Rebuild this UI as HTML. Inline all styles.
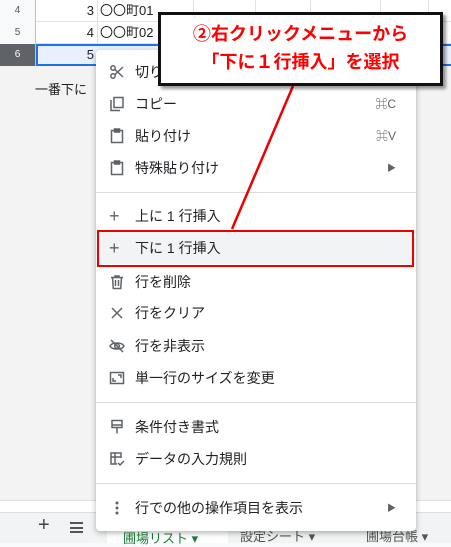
<!DOCTYPE html>
<html><head><meta charset="utf-8"><style>
*{margin:0;padding:0;box-sizing:border-box}
body{width:451px;height:543px;overflow:hidden;background:#f8f9fa;font-family:"Liberation Sans","Noto Sans CJK JP",sans-serif;position:relative;color:#202124}
.a{position:absolute}
.row{position:absolute;left:0;width:451px;height:22px;background:#fff;border-bottom:1px solid #e2e2e2;font-size:13px}
.rh{position:absolute;left:0;top:0;width:36px;height:22px;background:#f8f9fa;border-right:1px solid #c0c0c0;font-size:10px;color:#555;text-align:center;line-height:22px}
.vl{position:absolute;top:0;height:22px;width:1px;background:#e2e2e2}
.mi{position:absolute;left:96px;width:320px;height:32px;font-size:14px;line-height:32px}
.mi .t{position:absolute;left:39px}
.mi .k{position:absolute;right:20px;color:#5f6368;font-size:12px}
.mi .ic{position:absolute;left:13px;top:8px;width:16px;height:16px}
.dv{position:absolute;left:96px;width:320px;height:1px;background:#dadce0}
</style></head><body>
<div class="row" style="top:0"><div class="rh">4</div><div class="a" style="left:36px;width:58px;text-align:right;line-height:22px">3</div><div class="a" style="left:100px;line-height:22px">〇〇町01</div><div class="vl" style="left:97px"></div><div class="vl" style="left:193px"></div><div class="vl" style="left:255px"></div><div class="vl" style="left:310px"></div><div class="vl" style="left:380px"></div><div class="vl" style="left:428px"></div></div>
<div class="row" style="top:22px"><div class="rh">5</div><div class="a" style="left:36px;width:58px;text-align:right;line-height:22px">4</div><div class="a" style="left:100px;line-height:22px">〇〇町02</div><div class="vl" style="left:97px"></div><div class="vl" style="left:193px"></div><div class="vl" style="left:428px"></div></div>
<div class="row" style="top:44px;background:#e8f0fe"><div class="rh" style="background:#5f6368;color:#fff">6</div><div class="a" style="left:36px;width:58px;text-align:right;line-height:22px">5</div></div>
<div class="a" style="left:36px;top:44px;width:415px;height:22px;border:2px solid #1a73e8;border-right:none"></div>
<div class="a" style="left:0;top:66px;width:451px;height:446px;background:#f3f3f3"></div>
<div class="a" style="left:35px;top:79px;font-size:13px">一番下に</div>
<div class="a" style="left:0;top:500px;width:451px;height:12px;background:#fff;border-top:1px solid #ddd"></div>
<div class="a" style="left:0;top:512px;width:451px;height:31px;background:#f1f3f4;border-top:1px solid #ddd"></div>
<div class="a" style="left:38px;top:514px;font-size:20px;color:#444">+</div>
<div class="a" style="left:70px;top:522px;width:13px;height:11px;border-top:2px solid #555;border-bottom:2px solid #555"><div style="margin-top:2.5px;height:2px;background:#555"></div></div>
<div class="a" style="left:107px;top:528px;width:121px;height:15px;background:#fff;color:#188038;font-size:13px;padding-left:16px">圃場リスト ▾</div>
<div class="a" style="left:240px;top:526px;font-size:13px;color:#555">設定シート ▾</div>
<div class="a" style="left:366px;top:526px;font-size:13px;color:#555">圃場台帳 ▾</div>
<div class="a" style="left:96px;top:50px;width:320px;height:481px;background:#fff;border-radius:4px;box-shadow:0 2px 6px rgba(0,0,0,.3)"></div>
<div class="mi" style="top:56px"><svg class="ic" viewBox="0 0 16 16" fill="none" stroke="#5f6368" stroke-width="1.5"><circle cx="4" cy="4" r="2.2"/><circle cx="4" cy="12" r="2.2"/><path d="M6 5.5L14 13M6 10.5L14 3"/></svg><span class="t">切り取り</span><span class="k">⌘X</span></div>
<div class="mi" style="top:88px"><svg class="ic" viewBox="0 0 16 16" fill="none" stroke="#5f6368" stroke-width="1.5"><rect x="5" y="1.5" width="9" height="10"/><path d="M2 4v10.5h9"/></svg><span class="t">コピー</span><span class="k">⌘C</span></div>
<div class="mi" style="top:120px"><svg class="ic" viewBox="0 0 16 16" fill="none" stroke="#5f6368" stroke-width="1.5"><rect x="2.5" y="2.5" width="11" height="12"/><rect x="5.5" y="1" width="5" height="3" fill="#5f6368"/></svg><span class="t">貼り付け</span><span class="k">⌘V</span></div>
<div class="mi" style="top:152px"><svg class="ic" viewBox="0 0 16 16" fill="none" stroke="#5f6368" stroke-width="1.5"><rect x="2.5" y="2.5" width="11" height="12"/><rect x="5.5" y="1" width="5" height="3" fill="#5f6368"/></svg><span class="t">特殊貼り付け</span><span class="k" style="font-size:9px">▶</span></div>
<div class="dv" style="top:192px"></div>
<div class="mi" style="top:200px"><span class="ic" style="font-size:18px;line-height:16px;color:#5f6368">+</span><span class="t">上に 1 行挿入</span></div>
<div class="mi" style="top:232px;background:#f1f3f4"><span class="ic" style="font-size:18px;line-height:16px;color:#5f6368">+</span><span class="t">下に 1 行挿入</span></div>
<div class="a" style="left:97px;top:230px;width:317px;height:37px;border:2.5px solid #e00"></div>
<div class="mi" style="top:266px"><svg class="ic" viewBox="0 0 16 16" fill="none" stroke="#5f6368" stroke-width="1.5"><path d="M2 3.5h12M6 3.5V2h4v1.5M3.5 3.5l.8 11h7.4l.8-11M6.5 6v6M9.5 6v6"/></svg><span class="t">行を削除</span></div>
<div class="mi" style="top:297px"><svg class="ic" viewBox="0 0 16 16" fill="none" stroke="#5f6368" stroke-width="1.5"><path d="M3 3l10 10M13 3L3 13"/></svg><span class="t">行をクリア</span></div>
<div class="mi" style="top:330px"><svg class="ic" viewBox="0 0 16 16" fill="none" stroke="#5f6368" stroke-width="1.5"><path d="M1 8c2-4 12-4 14 0c-2 4-12 4-14 0z"/><circle cx="8" cy="8" r="2.3"/><path d="M2 2l12 12"/></svg><span class="t">行を非表示</span></div>
<div class="mi" style="top:362px"><svg class="ic" viewBox="0 0 16 16" fill="none" stroke="#5f6368" stroke-width="1.5"><rect x="1.5" y="2.5" width="13" height="11"/><path d="M4 8v3h3M12 8V5H9"/></svg><span class="t">単一行のサイズを変更</span></div>
<div class="dv" style="top:402px"></div>
<div class="mi" style="top:411px"><svg class="ic" viewBox="0 0 16 16" fill="none" stroke="#5f6368" stroke-width="1.5"><rect x="3" y="1.5" width="10" height="7"/><path d="M3 6h10M8 8.5v6"/></svg><span class="t">条件付き書式</span></div>
<div class="mi" style="top:443px"><svg class="ic" viewBox="0 0 16 16" fill="none" stroke="#5f6368" stroke-width="1.5"><path d="M12 7V2H2v11h6M2 6h10M6 2v11M9 12l2 2 4-4"/></svg><span class="t">データの入力規則</span></div>
<div class="dv" style="top:483px"></div>
<div class="mi" style="top:492px"><svg class="ic" viewBox="0 0 16 16" fill="#5f6368"><circle cx="8" cy="3" r="1.5"/><circle cx="8" cy="8" r="1.5"/><circle cx="8" cy="13" r="1.5"/></svg><span class="t">行での他の操作項目を表示</span><span class="k" style="font-size:9px">▶</span></div>
<svg class="a" style="left:0;top:0" width="451" height="543"><line x1="293" y1="86" x2="232" y2="229" stroke="#e00" stroke-width="2.5"/></svg>
<div class="a" style="left:158px;top:12px;width:285px;height:74px;background:#fff;border:3px solid #111;box-shadow:3px 3px 3px rgba(0,0,0,.4);color:#f00;font-size:18px;font-weight:bold;text-align:center;line-height:28px;padding-top:5px">②右クリックメニューから<br>「下に１行挿入」を選択</div>
</body></html>
